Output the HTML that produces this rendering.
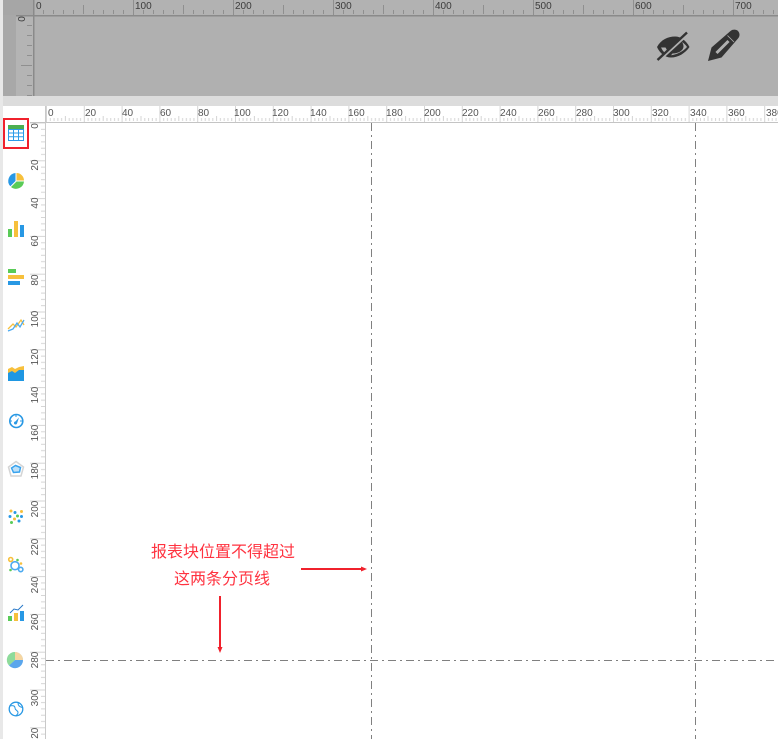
<!DOCTYPE html>
<html><head><meta charset="utf-8">
<style>
html,body{margin:0;padding:0;background:#fff;width:778px;height:739px;overflow:hidden}
svg{display:block;position:absolute;left:0;top:0}
text{font-family:"Liberation Sans",sans-serif}
.t{font-size:10px;fill:#555}
.g{font-size:10px;fill:#3c3c3c}
.cn{font-family:"Liberation Sans","Noto Sans CJK SC",sans-serif;font-size:16px;fill:#ff3340}
</style></head><body>
<svg width="778" height="739" viewBox="0 0 778 739" xmlns="http://www.w3.org/2000/svg">
<defs>
<pattern id="tt" patternUnits="userSpaceOnUse" x="33" y="0" width="100" height="16">
<path d="M.5 0V16M10.5 10V14M20.5 10V14M30.5 10V14M40.5 10V14M50.5 5V14M60.5 10V14M70.5 10V14M80.5 10V14M90.5 10V14" stroke="#8f8f8f" fill="none"/>
</pattern>
<pattern id="tl" patternUnits="userSpaceOnUse" x="0" y="15" width="34" height="100">
<path d="M16 .5H33M27 10.5H32M27 20.5H32M27 30.5H32M27 40.5H32M21 50.5H32M27 60.5H32M27 70.5H32M27 80.5H32M27 90.5H32" stroke="#8f8f8f" fill="none"/>
</pattern>
<pattern id="bt" patternUnits="userSpaceOnUse" x="46" y="0" width="37.8" height="122">
<path d="M.5 106V122M4.28 118V121M8.06 118V121M11.84 118V121M15.62 118V121M19.4 116V121M23.18 118V121M26.96 118V121M30.74 118V121M34.52 118V121" stroke="#d4d4d4" fill="none"/>
</pattern>
<pattern id="bl" patternUnits="userSpaceOnUse" x="0" y="122.5" width="46" height="37.8">
<path d="M30 .5H46M41 6.8H45M41 13.1H45M41 19.4H45M41 25.7H45M41 32H45" stroke="#d6d6d6" fill="none"/>
</pattern>
</defs>

<!-- page base -->
<rect width="778" height="739" fill="#fff"/>
<rect x="0" y="0" width="3" height="739" fill="#e8e8e8"/>

<!-- top gray panel -->
<rect x="3" y="0" width="775" height="96" fill="#b0b0b0"/>
<rect x="3" y="0" width="13" height="96" fill="#a8a8a8"/>
<rect x="16" y="16" width="17" height="80" fill="#b4b4b4"/>
<rect x="33" y="0" width="745" height="15" fill="#b2b2b2"/>
<rect x="3" y="0" width="30" height="15" fill="#a6a6a6"/>
<rect x="33" y="0" width="745" height="16" fill="url(#tt)"/>
<rect x="16" y="16" width="18" height="80" fill="url(#tl)"/>
<rect x="16" y="15" width="762" height="1.5" fill="#8a8a8a"/>
<rect x="33" y="0" width="1.5" height="96" fill="#8a8a8a"/>
<g>
<text class="g" x="36" y="9">0</text>
<text class="g" x="135" y="9">100</text>
<text class="g" x="235" y="9">200</text>
<text class="g" x="335" y="9">300</text>
<text class="g" x="435" y="9">400</text>
<text class="g" x="535" y="9">500</text>
<text class="g" x="635" y="9">600</text>
<text class="g" x="735" y="9">700</text>
<text class="g" transform="translate(25 19) rotate(-90)" text-anchor="middle">0</text>
</g>

<!-- eye-off icon -->
<path d="M657 47C661 39.5 668 36.5 675 36.5C681 36.5 686 40.5 689.5 47C685 53.5 678 57.5 671 57.5C665 57.5 660 53.5 657 47Z" fill="#333"/>
<path d="M661 47.5 665.5 47.5 667 50 664.5 52.5C663 51 662 49.5 661 47.5Z" fill="#b0b0b0"/>
<path d="M682 42C684 43.5 686 45 687 47C683 51.5 677 54.5 671 55.2L672.5 53.5C679 53.5 683.5 50 683.5 46.5C683.5 45 683 43.5 682 42Z" fill="#b0b0b0"/>
<path d="M660 60 689 33.5" stroke="#b0b0b0" stroke-width="2" fill="none"/>
<path d="M657.5 60 687 32.5" stroke="#333" stroke-width="2.4" fill="none"/>

<!-- pencil icon -->
<path d="M708 61 711.5 47.5 730.5 31C733 29 736.5 29.5 738 31C740 33 740 36.5 738 38.5L721.5 57.5Z" fill="#333"/>
<path d="M716.5 53 728.5 41" stroke="#b0b0b0" stroke-width="3" fill="none"/>
<path d="M727.5 35.5 734 42" stroke="#b0b0b0" stroke-width=".8" fill="none"/>

<!-- grey separator -->
<rect x="3" y="96" width="775" height="10" fill="#dcdcdc"/>

<!-- bottom rulers -->
<rect x="46" y="106" width="732" height="16" fill="url(#bt)"/>
<rect x="30" y="122" width="16" height="617" fill="url(#bl)"/>
<rect x="30" y="122" width="748" height="1" fill="#c4c4c4"/>
<rect x="45" y="106" width="1" height="633" fill="#c9c9c9"/>
<g>
<text class="t" x="48" y="116">0</text>
<text class="t" x="85" y="116">20</text>
<text class="t" x="122" y="116">40</text>
<text class="t" x="160" y="116">60</text>
<text class="t" x="198" y="116">80</text>
<text class="t" x="234" y="116">100</text>
<text class="t" x="272" y="116">120</text>
<text class="t" x="310" y="116">140</text>
<text class="t" x="348" y="116">160</text>
<text class="t" x="386" y="116">180</text>
<text class="t" x="424" y="116">200</text>
<text class="t" x="462" y="116">220</text>
<text class="t" x="500" y="116">240</text>
<text class="t" x="538" y="116">260</text>
<text class="t" x="576" y="116">280</text>
<text class="t" x="613" y="116">300</text>
<text class="t" x="652" y="116">320</text>
<text class="t" x="690" y="116">340</text>
<text class="t" x="728" y="116">360</text>
<text class="t" x="766" y="116">380</text>
</g>
<g>
<text class="t" text-anchor="middle" transform="translate(38 126) rotate(-90)">0</text>
<text class="t" text-anchor="middle" transform="translate(38 165) rotate(-90)">20</text>
<text class="t" text-anchor="middle" transform="translate(38 203) rotate(-90)">40</text>
<text class="t" text-anchor="middle" transform="translate(38 241) rotate(-90)">60</text>
<text class="t" text-anchor="middle" transform="translate(38 280) rotate(-90)">80</text>
<text class="t" text-anchor="middle" transform="translate(38 319) rotate(-90)">100</text>
<text class="t" text-anchor="middle" transform="translate(38 357) rotate(-90)">120</text>
<text class="t" text-anchor="middle" transform="translate(38 395) rotate(-90)">140</text>
<text class="t" text-anchor="middle" transform="translate(38 433) rotate(-90)">160</text>
<text class="t" text-anchor="middle" transform="translate(38 471) rotate(-90)">180</text>
<text class="t" text-anchor="middle" transform="translate(38 509) rotate(-90)">200</text>
<text class="t" text-anchor="middle" transform="translate(38 547) rotate(-90)">220</text>
<text class="t" text-anchor="middle" transform="translate(38 585) rotate(-90)">240</text>
<text class="t" text-anchor="middle" transform="translate(38 622) rotate(-90)">260</text>
<text class="t" text-anchor="middle" transform="translate(38 660) rotate(-90)">280</text>
<text class="t" text-anchor="middle" transform="translate(38 698) rotate(-90)">300</text>
<text class="t" text-anchor="middle" transform="translate(38 736) rotate(-90)">320</text>
</g>

<!-- page break lines -->
<g stroke="#808080" stroke-width="1" fill="none" stroke-dasharray="8 4 2 4">
<path d="M371.5 123V739"/>
<path d="M695.5 123V739"/>
<path d="M46 660.5H778"/>
</g>

<!-- red selection -->
<rect x="4" y="119" width="24" height="29" fill="none" stroke="#f0212c" stroke-width="2"/>

<!-- table -->
<rect x="8" y="125" width="16" height="4" fill="#4caf50"/>
<path d="M8.5 129.5H23.5V140.5H8.5ZM8.5 133H23.5M8.5 136.8H23.5M13.5 129.5V140.5M18.5 129.5V140.5" fill="#fff" stroke="#2b9be8" stroke-width="1"/>

<!-- pie -->
<path d="M16.5 180.5V173A7.5 7.5 0 0 1 24 180.5Z" fill="#f7c03c"/>
<path d="M16.5 181.5H24A8 8 0 0 1 11 187Z" fill="#5acb57"/>
<path d="M15.5 181 10.3 186.3A8 8 0 0 1 15.5 173Z" fill="#2898e4"/>

<!-- bars -->
<rect x="8" y="229" width="4" height="8" fill="#5acb57"/>
<rect x="14" y="221" width="4" height="16" fill="#f7c03c"/>
<rect x="20" y="225" width="4" height="12" fill="#2898e4"/>

<!-- hbars -->
<rect x="8" y="269" width="8" height="4" fill="#5acb57"/>
<rect x="8" y="275" width="16" height="4" fill="#f7c03c"/>
<rect x="8" y="281" width="12" height="4" fill="#2898e4"/>

<!-- line -->
<path d="M8 329 13 324 16 327 21 320 24 325" fill="none" stroke="#f7c03c" stroke-width="1.3"/>
<path d="M8 331 13 329 17 323 20 327 24 320" fill="none" stroke="#4caaf0" stroke-width="1.3"/>

<!-- area -->
<path d="M8 369 12 367 15 369 19 367 24 366V381H8Z" fill="#f7c03c"/>
<path d="M8 373 12 371 15 373 19 370 24 370V381H8Z" fill="#1f97e2"/>

<!-- gauge -->
<circle cx="16.3" cy="421" r="6.5" fill="none" stroke="#2898e4" stroke-width="1.6"/>
<path d="M14 423 19 417.5 17 423.5Z" fill="#2898e4"/>
<circle cx="15.5" cy="423" r="1.5" fill="#2898e4"/>
<path d="M10 421H12M20 421H22M16 415V417" stroke="#2898e4"/>

<!-- radar -->
<path d="M16 461.5 23.5 467 21 476H11L8.5 467Z" fill="none" stroke="#d4d4d4" stroke-width="1.5"/>
<path d="M15.5 465.5 20.5 467.5 19.5 472 13.5 472.5 11.5 468Z" fill="#bfe0f7" stroke="#39a3ee" stroke-width="1.5"/>

<!-- scatter -->
<g>
<circle cx="11" cy="511" r="1.5" fill="#f7c03c"/><circle cx="15" cy="512.5" r="1.5" fill="#2898e4"/><circle cx="21.5" cy="511.5" r="1.5" fill="#f7c03c"/>
<circle cx="10" cy="516.5" r="1.5" fill="#2898e4"/><circle cx="17.5" cy="516" r="1.5" fill="#5acb57"/><circle cx="21.5" cy="516.5" r="1.5" fill="#2898e4"/>
<circle cx="14.5" cy="519" r="1.5" fill="#f7c03c"/><circle cx="19" cy="521" r="1.5" fill="#2898e4"/><circle cx="11.5" cy="522.5" r="1.5" fill="#5acb57"/>
</g>

<!-- bubble -->
<circle cx="10.7" cy="559.5" r="2" fill="none" stroke="#f7c03c" stroke-width="1.6"/>
<circle cx="15" cy="565.7" r="4" fill="none" stroke="#4caaf0" stroke-width="1.6"/>
<circle cx="20.7" cy="569.5" r="2.2" fill="none" stroke="#4caaf0" stroke-width="1.6"/>
<circle cx="17.5" cy="560" r="1.3" fill="#5acb57"/><circle cx="21" cy="563.5" r="1.3" fill="#f7c03c"/><circle cx="10.5" cy="570" r="1.3" fill="#5acb57"/>

<!-- combo -->
<rect x="8" y="616" width="4" height="5" fill="#5acb57"/>
<rect x="14" y="613" width="4" height="8" fill="#f7c03c"/>
<rect x="20" y="611" width="4" height="10" fill="#2898e4"/>
<path d="M10 613 14 609 18 610 23 605" fill="none" stroke="#2878c8" stroke-width="1"/>

<!-- map pie -->
<circle cx="15" cy="660" r="8" fill="#a5d8f8"/>
<path d="M15 660V652A8 8 0 0 1 23 660Z" fill="#f6d6a2"/>
<path d="M15 660H23A8 8 0 0 1 9 665.5Z" fill="#5ba6ec"/>
<path d="M15 660 9 665.5A8 8 0 0 1 15 652Z" fill="#8edb9a"/>

<!-- globe -->
<circle cx="16" cy="709" r="6.8" fill="none" stroke="#2898e4" stroke-width="1.3"/>
<path d="M10 706C13 705 15 706 15 708C15 710 17 710 18 712C18 714 17 715 16 715.5M18 703C18 706 20 707 22.5 707.5" fill="none" stroke="#2898e4" stroke-width="1"/>

<!-- annotation -->
<text class="cn" x="223" y="557" text-anchor="middle">报表块位置不得超过</text>
<text class="cn" x="222" y="584" text-anchor="middle">这两条分页线</text>
<rect x="301" y="568" width="62" height="2" fill="#f0212c"/>
<path d="M367 569 361 566.5V571.5Z" fill="#f0212c"/>
<rect x="219" y="596" width="2" height="52" fill="#f0212c"/>
<path d="M220 653 217.5 647H222.5Z" fill="#f0212c"/>
</svg>
</body></html>
